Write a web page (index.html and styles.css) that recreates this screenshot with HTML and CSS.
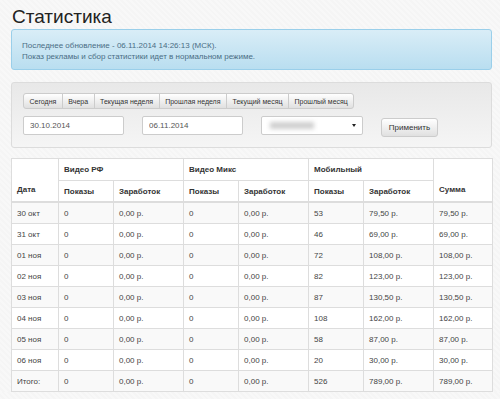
FILE: index.html
```html
<!DOCTYPE html>
<html lang="ru">
<head>
    <meta charset="UTF-8">
    <title>Статистика</title>
    <link rel="stylesheet" href="styles.css">
</head>
<body>
    <h1>Статистика</h1>
    <div class="alert">
        Последнее обновление - 06.11.2014 14:26:13 (МСК).<br>
        Показ рекламы и сбор статистики идет в нормальном режиме.
    </div>

    <div class="well">
        <div class="btn-group">
            <button>Сегодня</button>
            <button>Вчера</button>
            <button>Текущая неделя</button>
            <button>Прошлая неделя</button>
            <button>Текущий месяц</button>
            <button>Прошлый месяц</button>
        </div>
        <div class="filters">
            <input type="text" value="30.10.2014">
            <input type="text" value="06.11.2014">
            <div class="select"><span class="blur"></span><span class="caret"></span></div>
            <button class="apply">Применить</button>
        </div>
    </div>

    <table class="stats">
        <colgroup>
            <col style="width: 47px">
            <col style="width: 55px">
            <col style="width: 70px">
            <col style="width: 55px">
            <col style="width: 70px">
            <col style="width: 55px">
            <col style="width: 70px">
            <col style="width: 59px">
        </colgroup>
        <thead>
            <tr class="group">
                <th rowspan="2" class="bottom">Дата</th>
                <th colspan="2">Видео РФ</th>
                <th colspan="2">Видео Микс</th>
                <th colspan="2">Мобильный</th>
                <th rowspan="2" class="bottom">Сумма</th>
            </tr>
            <tr class="sub">
                <th>Показы</th><th>Заработок</th>
                <th>Показы</th><th>Заработок</th>
                <th>Показы</th><th>Заработок</th>
            </tr>
        </thead>
        <tbody id="rows"></tbody>
    </table>

    <script>
        const data = [
            ['30 окт', 53, '79,50'],
            ['31 окт', 46, '69,00'],
            ['01 ноя', 72, '108,00'],
            ['02 ноя', 82, '123,00'],
            ['03 ноя', 87, '130,50'],
            ['04 ноя', 108, '162,00'],
            ['05 ноя', 58, '87,00'],
            ['06 ноя', 20, '30,00'],
            ['Итого:', 526, '789,00']
        ];
        const tbody = document.getElementById('rows');
        data.forEach(function (r) {
            const tr = document.createElement('tr');
            tr.innerHTML = '<td>' + r[0] + '</td><td>0</td><td>0,00 р.</td><td>0</td><td>0,00 р.</td>' +
                '<td>' + r[1] + '</td><td>' + r[2] + ' р.</td><td>' + r[2] + ' р.</td>';
            tbody.appendChild(tr);
        });
    </script>
</body>
</html>
```

FILE: styles.css
```css
body {
    margin: 0;
    padding: 0 8px 0 11px;
    font-family: "Liberation Sans", Arial, sans-serif;
    color: #333;
    background: #f7f7f7;
    background-image: repeating-linear-gradient(45deg, #f8f8f8 0 2px, #f5f5f5 2px 4px);
}
h1 {
    margin: 0;
    padding: 6px 0 0 1px;
    height: 23px;
    font-size: 19px;
    font-weight: normal;
    color: #222;
}
.alert {
    height: 29px;
    margin: 0;
    padding: 10px 10px 0;
    font-size: 8px;
    line-height: 11px;
    color: #4a6d84;
    background: linear-gradient(#d9edf7, #b9def0);
    border: 1px solid #9acfea;
    border-radius: 3px;
}
.well {
    height: 54px;
    margin-top: 12px;
    padding: 10px 11px 0;
    background: linear-gradient(#e8e8e8, #f5f5f5);
    border: 1px solid #dcdcdc;
    border-radius: 3px;
}
.btn-group {
    display: flex;
}
.btn-group button {
    height: 16px;
    padding: 0 5.5px;
    font-family: inherit;
    font-size: 7px;
    color: #333;
    background: linear-gradient(#fff, #e0e0e0);
    border: 1px solid #ccc;
    margin-left: -1px;
}
.btn-group button:first-child {
    margin-left: 0;
    border-radius: 3px 0 0 3px;
}
.btn-group button:last-child {
    border-radius: 0 3px 3px 0;
}
.filters {
    display: flex;
    align-items: flex-start;
    margin-top: 7px;
    gap: 18px;
}
.filters input {
    box-sizing: border-box;
    width: 101px;
    height: 19px;
    padding: 0 6px;
    font-family: inherit;
    font-size: 8px;
    color: #555;
    background: #fff;
    border: 1px solid #ccc;
    border-radius: 2px;
}
.select {
    box-sizing: border-box;
    width: 102px;
    height: 19px;
    display: flex;
    align-items: center;
    justify-content: space-between;
    padding: 0 6px 0 8px;
    background: #fff;
    border: 1px solid #ccc;
    border-radius: 2px;
}
.blur {
    width: 44px;
    height: 7px;
    background: #cfcfcf;
    filter: blur(2px);
}
.caret {
    width: 0;
    height: 0;
    border-left: 2px solid transparent;
    border-right: 2px solid transparent;
    border-top: 3px solid #222;
}
.apply {
    box-sizing: border-box;
    width: 57px;
    height: 19px;
    margin-top: 2px;
    font-family: inherit;
    font-size: 8px;
    color: #333;
    background: linear-gradient(#fff, #e0e0e0);
    border: 1px solid #ccc;
    border-radius: 3px;
}
.stats {
    margin-top: 10px;
    width: 481px;
    table-layout: fixed;
    border-collapse: collapse;
    background: #fff;
    font-size: 8px;
    line-height: 9px;
}
.stats th,
.stats td {
    height: 20px;
    padding: 0 5px;
    text-align: left;
    border: 1px solid #ddd;
}
.stats th {
    font-weight: bold;
    color: #333;
}
.stats .group th {
    height: 21px;
    vertical-align: middle;
}
.stats .sub th {
    height: 20px;
    border-bottom-width: 2px;
    vertical-align: middle;
}
.stats .group th.bottom {
    border-bottom-width: 2px;
    vertical-align: bottom;
    padding-bottom: 7px;
}
.stats td {
    color: #444;
}
.stats tbody tr:nth-child(odd) {
    background: #f9f9f9;
}
```
